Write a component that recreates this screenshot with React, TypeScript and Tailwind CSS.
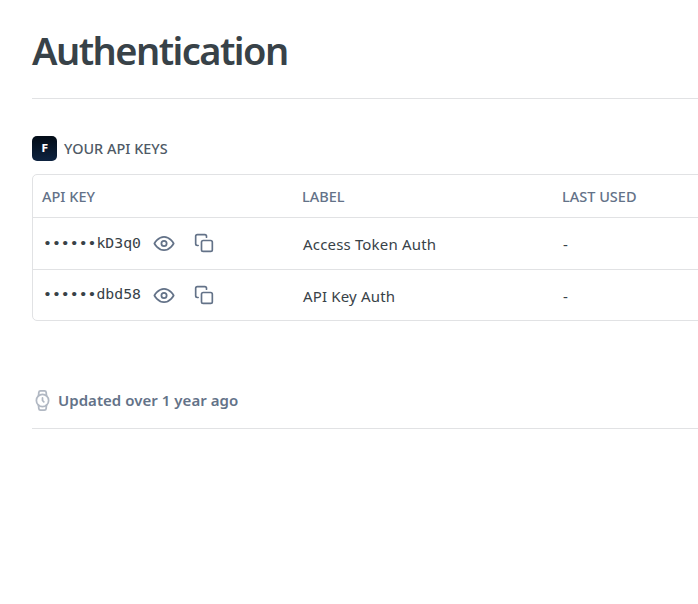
const keys = [
  { suffix: "kD3q0", label: "Access Token Auth" },
  { suffix: "dbd58", label: "API Key Auth" },
];

function EyeIcon() {
  return (
    <svg viewBox="-0.6 0 24 24" className="mt-[15px] -ml-px h-[21px] w-[21px] shrink-0 overflow-visible text-[#637288]" fill="none" stroke="currentColor" strokeWidth="2" strokeLinecap="round" strokeLinejoin="round">
      <path d="M1 12s4-7.5 11-7.5S23 12 23 12s-4 7.5-11 7.5S1 12 1 12z" />
      <circle cx="12" cy="12" r="3" />
    </svg>
  );
}

function CopyIcon() {
  return (
    <svg viewBox="0 0 24 24" className="mt-[15px] ml-5 size-5 shrink-0 text-[#637288]" fill="none" stroke="currentColor" strokeWidth="2" strokeLinecap="round" strokeLinejoin="round">
      <rect x="9" y="9" width="13" height="13" rx="2" />
      <path d="M5 15h-1a2 2 0 0 1-2-2V4a2 2 0 0 1 2-2h9a2 2 0 0 1 2 2v1" />
    </svg>
  );
}

function WatchIcon() {
  return (
    <svg viewBox="0 0 24 24" className="size-[21px] shrink-0 text-[#b1b8c3]" fill="none" stroke="currentColor" strokeWidth="2" strokeLinecap="round" strokeLinejoin="round">
      <circle cx="12" cy="12" r="7" />
      <path d="M12 9v3l1.5 1.5" />
      <path d="m16.5 17.4-.35 3.8a2 2 0 0 1-2 1.8H9.8a2 2 0 0 1-2-1.8l-.35-3.8m0-10.8.35-3.8a2 2 0 0 1 2-1.8h4.4a2 2 0 0 1 2 1.8l.35 3.8" />
    </svg>
  );
}

function KeyRow({ suffix, label, last }: { suffix: string; label: string; last: boolean }) {
  return (
    <div className={`flex text-[#384248] ${last ? "h-[51px]" : "h-[52px] border-b border-[#e1e2e4]"}`}>
      <div className="flex w-[260px] shrink-0 pl-[10px]">
        <code className={`w-[111px] shrink-0 font-['DejaVu_Sans_Mono',monospace] text-[14.8px] leading-5 whitespace-pre ${last ? "pt-[14px]" : "pt-[15px]"}`}>
          {"••••••" + suffix}
        </code>
        <EyeIcon />
        <CopyIcon />
      </div>
      <div className="w-[260px] shrink-0 pt-4 pl-[10px] text-[15px] leading-5 tracking-[0.17px]">{label}</div>
      <div className="shrink-0 pt-4 pl-[10px] text-[15px] leading-5">-</div>
    </div>
  );
}

export default function App() {
  return (
    <main className="h-[604px] w-full overflow-hidden bg-white pl-8 font-['Noto_Sans',sans-serif] whitespace-nowrap">
      <header className="h-[99px] border-b border-[#e1e2e4] pt-[26px]">
        <h1 className="text-[38px] leading-[48px] font-semibold tracking-[-1.55px] text-[#384248]">Authentication</h1>
      </header>
      <div className="mt-[37px] flex h-[25px] items-center">
        <span className="flex size-[25px] items-center justify-center rounded-[5px] bg-gradient-to-b from-[#030c17] to-[#0e2340] text-[10px] font-bold text-white"><span className="pl-px font-['DejaVu_Sans',sans-serif]">F</span></span>
        <h2 className="ml-[7px] text-[14.4px] leading-[21px] font-medium tracking-[0.03px] text-[#4f5a66]">YOUR API KEYS</h2>
      </div>
      <section className="mt-[13px] h-[147px] w-[700px] rounded-l-[5px] border border-[#e1e2e4]">
        <div className="flex h-[43px] border-b border-[#e1e2e4] pt-[11px] pl-[9px] text-[14.5px] leading-5 font-medium text-[#637288]">
          <span className="w-[260px] shrink-0">API KEY</span>
          <span className="w-[260px] shrink-0">LABEL</span>
          <span>LAST USED</span>
        </div>
        {keys.map((key, i) => (
          <KeyRow key={key.suffix} {...key} last={i === keys.length - 1} />
        ))}
      </section>
      <footer className="mt-[69px] flex h-[39px] border-b border-[#e1e2e4] text-[#637288]">
        <WatchIcon />
        <span className="ml-[5px] text-[15px] leading-[21px] font-semibold tracking-[0.04px]">Updated over 1 year ago</span>
      </footer>
    </main>
  );
}
